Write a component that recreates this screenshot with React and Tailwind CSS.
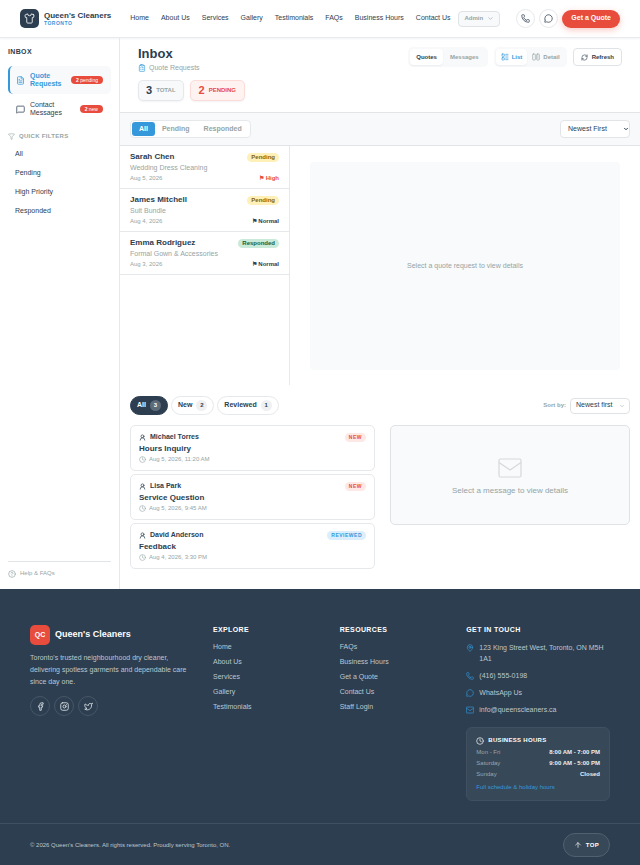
import { useState } from "react";
import {
  Shirt, ChevronDown, Phone, MessageCircle, FileText, MessageSquare, Filter,
  CircleHelp, ClipboardList, LayoutList, RefreshCw, UserRound, Clock, MapPin,
  Facebook, Instagram, Twitter, ArrowUp,
} from "lucide-react";

const NAV = ["Home", "About Us", "Services", "Gallery", "Testimonials", "FAQs", "Business Hours", "Contact Us"];

const QUOTES = [
  { name: "Sarah Chen", item: "Wedding Dress Cleaning", date: "Aug 5, 2026", status: "Pending", priority: "High" },
  { name: "James Mitchell", item: "Suit Bundle", date: "Aug 4, 2026", status: "Pending", priority: "Normal" },
  { name: "Emma Rodriguez", item: "Formal Gown & Accessories", date: "Aug 3, 2026", status: "Responded", priority: "Normal" },
];

const MESSAGES = [
  { name: "Michael Torres", subject: "Hours Inquiry", date: "Aug 5, 2026, 11:20 AM", status: "New" },
  { name: "Lisa Park", subject: "Service Question", date: "Aug 5, 2026, 9:45 AM", status: "New" },
  { name: "David Anderson", subject: "Feedback", date: "Aug 4, 2026, 3:30 PM", status: "Reviewed" },
];

function DetailIcon() {
  return (
    <svg viewBox="0 0 24 24" className="size-2" fill="none" stroke="currentColor" strokeWidth="2" strokeLinecap="round" strokeLinejoin="round">
      <rect x="2" y="3" width="8" height="18" rx="2" />
      <rect x="14" y="3" width="8" height="18" rx="2" />
      <path d="M17 9h1M17 15h1" />
    </svg>
  );
}

function EnvelopeIcon({ className, strokeWidth = 1.2 }) {
  return (
    <svg viewBox="0 0 24 20" className={className} fill="none" stroke="currentColor" strokeWidth={strokeWidth} strokeLinejoin="round">
      <rect x="1" y="1" width="22" height="18" rx="1.5" />
      <path d="M1 4.500 12 12 23 4.500" />
    </svg>
  );
}

function MailIcon({ className }) {
  return <EnvelopeIcon className={className} strokeWidth={2} />;
}

function Header() {
  return (
    <header className="flex items-center border-b border-[#e8ebee] bg-white px-5 py-[9px] shadow-xs">
      <a href="#home" className="flex items-center gap-[5px]">
        <span className="flex size-[19px] items-center justify-center rounded-[5px] bg-[#2c3e50] text-white">
          <Shirt className="size-[11px]" strokeWidth={1.8} />
        </span>
        <span>
          <span className="block text-[8px] leading-[9px] font-bold">Queen's Cleaners</span>
          <span className="block text-[5px] leading-[6px] font-bold tracking-widest text-[#3498db]">TORONTO</span>
        </span>
      </a>
      <nav className="ml-[19px] flex gap-3 text-[7px]">
        {NAV.map((label) => (
          <a key={label} href="#nav" className="whitespace-nowrap">{label}</a>
        ))}
      </nav>
      <button className="ml-2 flex h-4 items-center gap-1 rounded-[4px] border border-[#dfe3e6] bg-[#f8f9fa] px-[5px] text-[6px] font-bold text-[#95a5a6]">
        Admin <ChevronDown className="size-[7px]" />
      </button>
      <div className="ml-auto flex items-center gap-1">
        <a href="#phone" aria-label="Phone" className="flex size-[19px] items-center justify-center rounded-full border border-[#e6e9ec]">
          <Phone className="size-[9px]" />
        </a>
        <a href="#chat" aria-label="Chat" className="flex size-[19px] items-center justify-center rounded-full border border-[#e6e9ec]">
          <MessageCircle className="size-[9px]" />
        </a>
        <button className="h-[18px] rounded-full bg-[#e74c3c] px-[9px] text-[7px] font-bold whitespace-nowrap text-white shadow-[0_2px_6px_rgba(231,76,60,0.3)]">
          Get a Quote
        </button>
      </div>
    </header>
  );
}

function SidebarItem({ icon: Icon, label, count, unit, active }) {
  return (
    <a
      href="#inbox"
      className={`flex h-7 items-center rounded-[5px] border-l-2 pr-2 pl-[6px] text-[7px] leading-2 ${
        active ? "border-[#3498db] bg-[#f8f9fa] font-bold text-[#3498db]" : "border-transparent"
      }`}
    >
      <Icon className="size-[9px] shrink-0" />
      <span className="ml-[5px] w-8">{label}</span>
      <span className="ml-auto rounded-full bg-[#e74c3c] px-[5px] text-[5px] leading-2 font-normal whitespace-nowrap text-white">
        <b>{count}</b> {unit}
      </span>
    </a>
  );
}

function Sidebar() {
  return (
    <aside className="flex w-[120px] shrink-0 flex-col border-r border-[#e6e9ec] px-2 pt-[9px] pb-[11px]">
      <h2 className="text-[7px] leading-[10px] font-bold tracking-wider">INBOX</h2>
      <div className="mt-[9px] flex flex-col gap-[1px]">
        <SidebarItem icon={FileText} label="Quote Requests" count={2} unit="pending" active />
        <SidebarItem icon={MessageSquare} label="Contact Messages" count={2} unit="new" />
      </div>
      <h3 className="mt-2 flex items-center gap-1 text-[6px] leading-[10px] font-bold tracking-wider text-[#95a5a6]">
        <Filter className="size-[7px]" /> QUICK FILTERS
      </h3>
      <ul className="mt-1 text-[7px]">
        {["All", "Pending", "High Priority", "Responded"].map((f) => (
          <li key={f}>
            <button className="block h-[19px] w-full px-[7px] text-left">{f}</button>
          </li>
        ))}
      </ul>
      <a href="#help" className="mt-auto flex items-center gap-1 border-t border-[#e1e5e8] pt-[7px] text-[6px] leading-[9px] text-[#95a5a6]">
        <CircleHelp className="size-2" /> Help &amp; FAQs
      </a>
    </aside>
  );
}

function InboxHeader() {
  return (
    <div className="flex items-start justify-between px-[18px] pt-2 pb-[11px]">
      <div>
        <h1 className="text-[13px] leading-[15px] font-bold">Inbox</h1>
        <p className="mt-[2px] flex items-center gap-[3px] text-[7px] leading-[9px] text-[#95a5a6]">
          <ClipboardList className="size-2 text-[#3498db]" /> Quote Requests
        </p>
        <div className="mt-2 flex gap-[6px]">
          <div className="flex h-[21px] items-center gap-1 rounded-[5px] border border-[#e6e9ec] bg-[#f8f9fa] px-[7px] shadow-xs">
            <b className="text-[11px]">3</b>
            <span className="text-[6px] font-bold text-[#95a5a6]">TOTAL</span>
          </div>
          <div className="flex h-[21px] items-center gap-1 rounded-[5px] border border-[#fbdcd9] bg-[#fff3f2] px-2 text-[#e74c3c] shadow-xs">
            <b className="text-[11px]">2</b>
            <span className="text-[6px] font-bold">PENDING</span>
          </div>
        </div>
      </div>
      <div className="mt-[1px] flex items-center gap-[6px] text-[6px] font-bold">
        <div className="flex rounded-[5px] bg-[#f8f9fa] p-[2px]">
          <button className="h-4 rounded-[4px] bg-white px-[6px] shadow-xs">Quotes</button>
          <button className="h-4 px-[7px] text-[#95a5a6]">Messages</button>
        </div>
        <div className="flex rounded-[5px] bg-[#f8f9fa] p-[2px]">
          <button className="flex h-4 items-center gap-[3px] rounded-[4px] bg-white px-[5px] text-[#3498db] shadow-xs">
            <LayoutList className="size-2" /> List
          </button>
          <button className="flex h-4 items-center gap-[3px] px-[5px] text-[#95a5a6]">
            <DetailIcon /> Detail
          </button>
        </div>
        <button className="flex h-[18px] items-center gap-1 rounded-[4px] border border-[#dfe3e6] px-[7px]">
          <RefreshCw className="size-[7px]" /> Refresh
        </button>
      </div>
    </div>
  );
}

function QuoteToolbar() {
  const [tab, setTab] = useState("All");
  return (
    <div className="flex items-center justify-between border-y border-[#e1e5e8] bg-[#f8f9fb] px-[10px] py-[7px]">
      <div className="flex rounded-[4px] border border-[#e6e9ec] bg-white p-[1px]">
        {["All", "Pending", "Responded"].map((t) => (
          <button
            key={t}
            onClick={() => setTab(t)}
            className={`h-[14px] rounded-[3px] px-[7px] text-[7px] font-bold ${
              tab === t ? "bg-[#3498db] text-white" : "text-[#95a5a6]"
            }`}
          >
            {t}
          </button>
        ))}
      </div>
      <div className="relative flex">
        <select aria-label="Sort quotes" className="h-[18px] w-[70px] appearance-none rounded-[4px] border border-[#e1e5e8] bg-white pl-[7px] text-[7px]">
          <option>Newest First</option>
          <option>Oldest First</option>
        </select>
        <ChevronDown className="pointer-events-none absolute top-[6px] right-[1px] size-[6px]" strokeWidth={4} />
      </div>
    </div>
  );
}

function QuoteRow({ quote }) {
  const pending = quote.status === "Pending";
  return (
    <li className="border-b border-[#e6e9ec] px-[10px] pt-[6px] pb-[5px]">
      <div className="flex items-center justify-between">
        <span className="text-[8px] leading-[10px] font-bold">{quote.name}</span>
        <span className={`rounded-full px-1 text-[6px] leading-[9px] font-bold ${pending ? "bg-[#fff0b8] text-[#856404]" : "bg-[#c9ead8] text-[#155f38]"}`}>
          {quote.status}
        </span>
      </div>
      <p className="text-[7px] leading-[12px] text-[#95a5a6]">{quote.item}</p>
      <div className="flex justify-between text-[6px] leading-[9px]">
        <span className="text-[#95a5a6]">{quote.date}</span>
        <span className={`font-bold ${quote.priority === "High" ? "text-[#e74c3c]" : ""}`}>⚑ {quote.priority}</span>
      </div>
    </li>
  );
}

function Quotes() {
  return (
    <section className="flex">
      <ul className="w-[170px] shrink-0 border-r border-[#e6e9ec]">
        {QUOTES.map((q) => (
          <QuoteRow key={q.name} quote={q} />
        ))}
      </ul>
      <div className="flex-1 px-5 pt-4 pb-[15px]">
        <div className="flex min-h-52 items-center justify-center rounded-[4px] bg-[#f8fafb] text-[7px] text-[#95a5a6]">
          Select a quote request to view details
        </div>
      </div>
    </section>
  );
}

function Messages() {
  const [tab, setTab] = useState("All");
  return (
    <section className="px-[10px] pt-[11px] pb-5">
      <div className="flex items-center justify-between">
        <div className="flex gap-[3px]">
          {[["All", 3], ["New", 2], ["Reviewed", 1]].map(([label, count]) => (
            <button
              key={label}
              onClick={() => setTab(label)}
              className={`flex h-[19px] items-center gap-1 rounded-full border px-[6px] text-[7px] font-bold ${
                tab === label ? "border-[#2c3e50] bg-[#2c3e50] text-white" : "border-[#e6e9ec]"
              }`}
            >
              {label}
              <span className={`flex size-[11px] items-center justify-center rounded-full text-[6px] ${tab === label ? "bg-[#5d6b79]" : "bg-[#eef0f1]"}`}>
                {count}
              </span>
            </button>
          ))}
        </div>
        <label className="flex items-center gap-1 text-[6px] font-bold text-[#95a5a6]">
          Sort by:
          <span className="relative flex">
            <select className="h-4 w-[60px] appearance-none rounded-[4px] border border-[#dfe3e6] bg-white pl-[5px] text-[7px] font-normal text-[#2c3e50]">
              <option>Newest first</option>
              <option>Oldest first</option>
            </select>
            <ChevronDown className="pointer-events-none absolute top-[5px] right-[5px] size-[6px]" />
          </span>
        </label>
      </div>
      <div className="mt-[10px] grid grid-cols-[49fr_48fr] items-start gap-[15px]">
        <ul className="flex flex-col gap-[3px]">
          {MESSAGES.map((m) => (
            <li key={m.name} className="rounded-[5px] border border-[#e6e9ec] px-[8px] py-[6px]">
              <div className="flex items-center gap-1">
                <UserRound className="size-[7px]" strokeWidth={2.4} />
                <span className="text-[7px] leading-[10px] font-bold">{m.name}</span>
                <span className={`ml-auto rounded-full px-1 text-[5px] leading-[9px] font-bold tracking-widest uppercase ${m.status === "New" ? "bg-[#fde8e6] text-[#e74c3c]" : "bg-[#dceefb] text-[#3498db]"}`}>
                  {m.status}
                </span>
              </div>
              <p className="mt-[1px] text-[8px] leading-[11px] font-bold">{m.subject}</p>
              <p className="flex items-center gap-[3px] text-[6px] leading-[10px] text-[#95a5a6]">
                <Clock className="size-[7px]" /> {m.date}
              </p>
            </li>
          ))}
        </ul>
        <div className="flex min-h-[100px] flex-col items-center justify-center gap-[7px] rounded-[5px] border border-[#dfe3e6] bg-[#f8fafb] pt-[3px]">
          <EnvelopeIcon className="h-5 w-6 text-[#d5d9dc]" />
          <p className="text-[8px] leading-[11px] text-[#95a5a6]">Select a message to view details</p>
        </div>
      </div>
    </section>
  );
}

function LinkColumn({ title, links }) {
  return (
    <div>
      <h3 className="text-[7px] leading-[9px] font-bold tracking-wider text-white">{title}</h3>
      <ul className="mt-[5px] text-[7px] leading-[15px]">
        {links.map((l) => (
          <li key={l}><a href="#footer">{l}</a></li>
        ))}
      </ul>
    </div>
  );
}

function Footer() {
  const contacts = [
    [MapPin, "123 King Street West, Toronto, ON M5H 1A1"],
    [Phone, "(416) 555-0198"],
    [MessageCircle, "WhatsApp Us"],
    [MailIcon, "info@queenscleaners.ca"],
  ];
  const hours = [
    ["Mon - Fri", "8:00 AM - 7:00 PM"],
    ["Saturday", "9:00 AM - 5:00 PM"],
    ["Sunday", "Closed"],
  ];
  return (
    <footer className="bg-[#2c3e50] text-[#bdc7cf]">
      <div className="grid grid-cols-[1.55fr_1fr_1fr_1.4fr] gap-6 px-[30px] pt-9 pb-[22px]">
        <div>
          <div className="flex items-center gap-[5px]">
            <span className="flex size-5 items-center justify-center rounded-[5px] bg-[#e74c3c] text-[7px] font-bold text-white">QC</span>
            <span className="text-[9px] font-bold text-white">Queen's Cleaners</span>
          </div>
          <p className="mt-[7px] text-[7px] leading-[12px]">
            Toronto's trusted neighbourhood dry cleaner, delivering spotless garments and dependable care since day one.
          </p>
          <div className="mt-2 flex gap-1">
            {[Facebook, Instagram, Twitter].map((Icon, i) => (
              <a key={i} href="#social" aria-label="Social profile" className="flex size-5 items-center justify-center rounded-full border border-[#475767] text-[#e3e8eb]">
                <Icon className="size-[9px]" strokeWidth={2.2} />
              </a>
            ))}
          </div>
        </div>
        <LinkColumn title="EXPLORE" links={["Home", "About Us", "Services", "Gallery", "Testimonials"]} />
        <LinkColumn title="RESOURCES" links={["FAQs", "Business Hours", "Get a Quote", "Contact Us", "Staff Login"]} />
        <div>
          <h3 className="text-[7px] leading-[9px] font-bold tracking-wider text-white">GET IN TOUCH</h3>
          <ul className="mt-2 flex flex-col gap-[6px] text-[7px] leading-[11px]">
            {contacts.map(([Icon, text]) => (
              <li key={text} className="flex gap-[5px]">
                <Icon className="mt-[2px] size-2 shrink-0 text-[#3498db]" />
                <span>{text}</span>
              </li>
            ))}
          </ul>
          <div className="mt-3 rounded-[6px] border border-[#405060] bg-[#374858] px-[9px] py-2">
            <h4 className="flex items-center gap-1 text-[6px] leading-[9px] font-bold tracking-wider text-white">
              <Clock className="size-2" /> BUSINESS HOURS
            </h4>
            <dl className="mt-[2px] text-[6px] leading-[11px]">
              {hours.map(([day, time]) => (
                <div key={day} className="flex justify-between">
                  <dt className="text-[#9aa6b0]">{day}</dt>
                  <dd className="font-bold text-[#ecf0f1]">{time}</dd>
                </div>
              ))}
            </dl>
            <a href="#hours" className="mt-[2px] block text-[6px] leading-[10px] text-[#3498db]">Full schedule &amp; holiday hours</a>
          </div>
        </div>
      </div>
      <div className="flex items-center justify-between border-t border-[#3f5061] px-[30px] pt-[9px] pb-2 text-[6px]">
        <p>© 2026 Queen's Cleaners. All rights reserved. Proudly serving Toronto, ON.</p>
        <button className="flex h-6 items-center gap-1 rounded-full border border-[#526170] bg-[#374858] px-[10px] font-bold tracking-wider text-white">
          <ArrowUp className="size-2" /> TOP
        </button>
      </div>
    </footer>
  );
}

export default function App() {
  return (
    <div className="bg-white font-['Liberation_Sans',Arial,sans-serif] text-[#2c3e50]">
      <Header />
      <div className="flex">
        <Sidebar />
        <main className="min-w-0 flex-1">
          <InboxHeader />
          <QuoteToolbar />
          <Quotes />
          <Messages />
        </main>
      </div>
      <Footer />
    </div>
  );
}
